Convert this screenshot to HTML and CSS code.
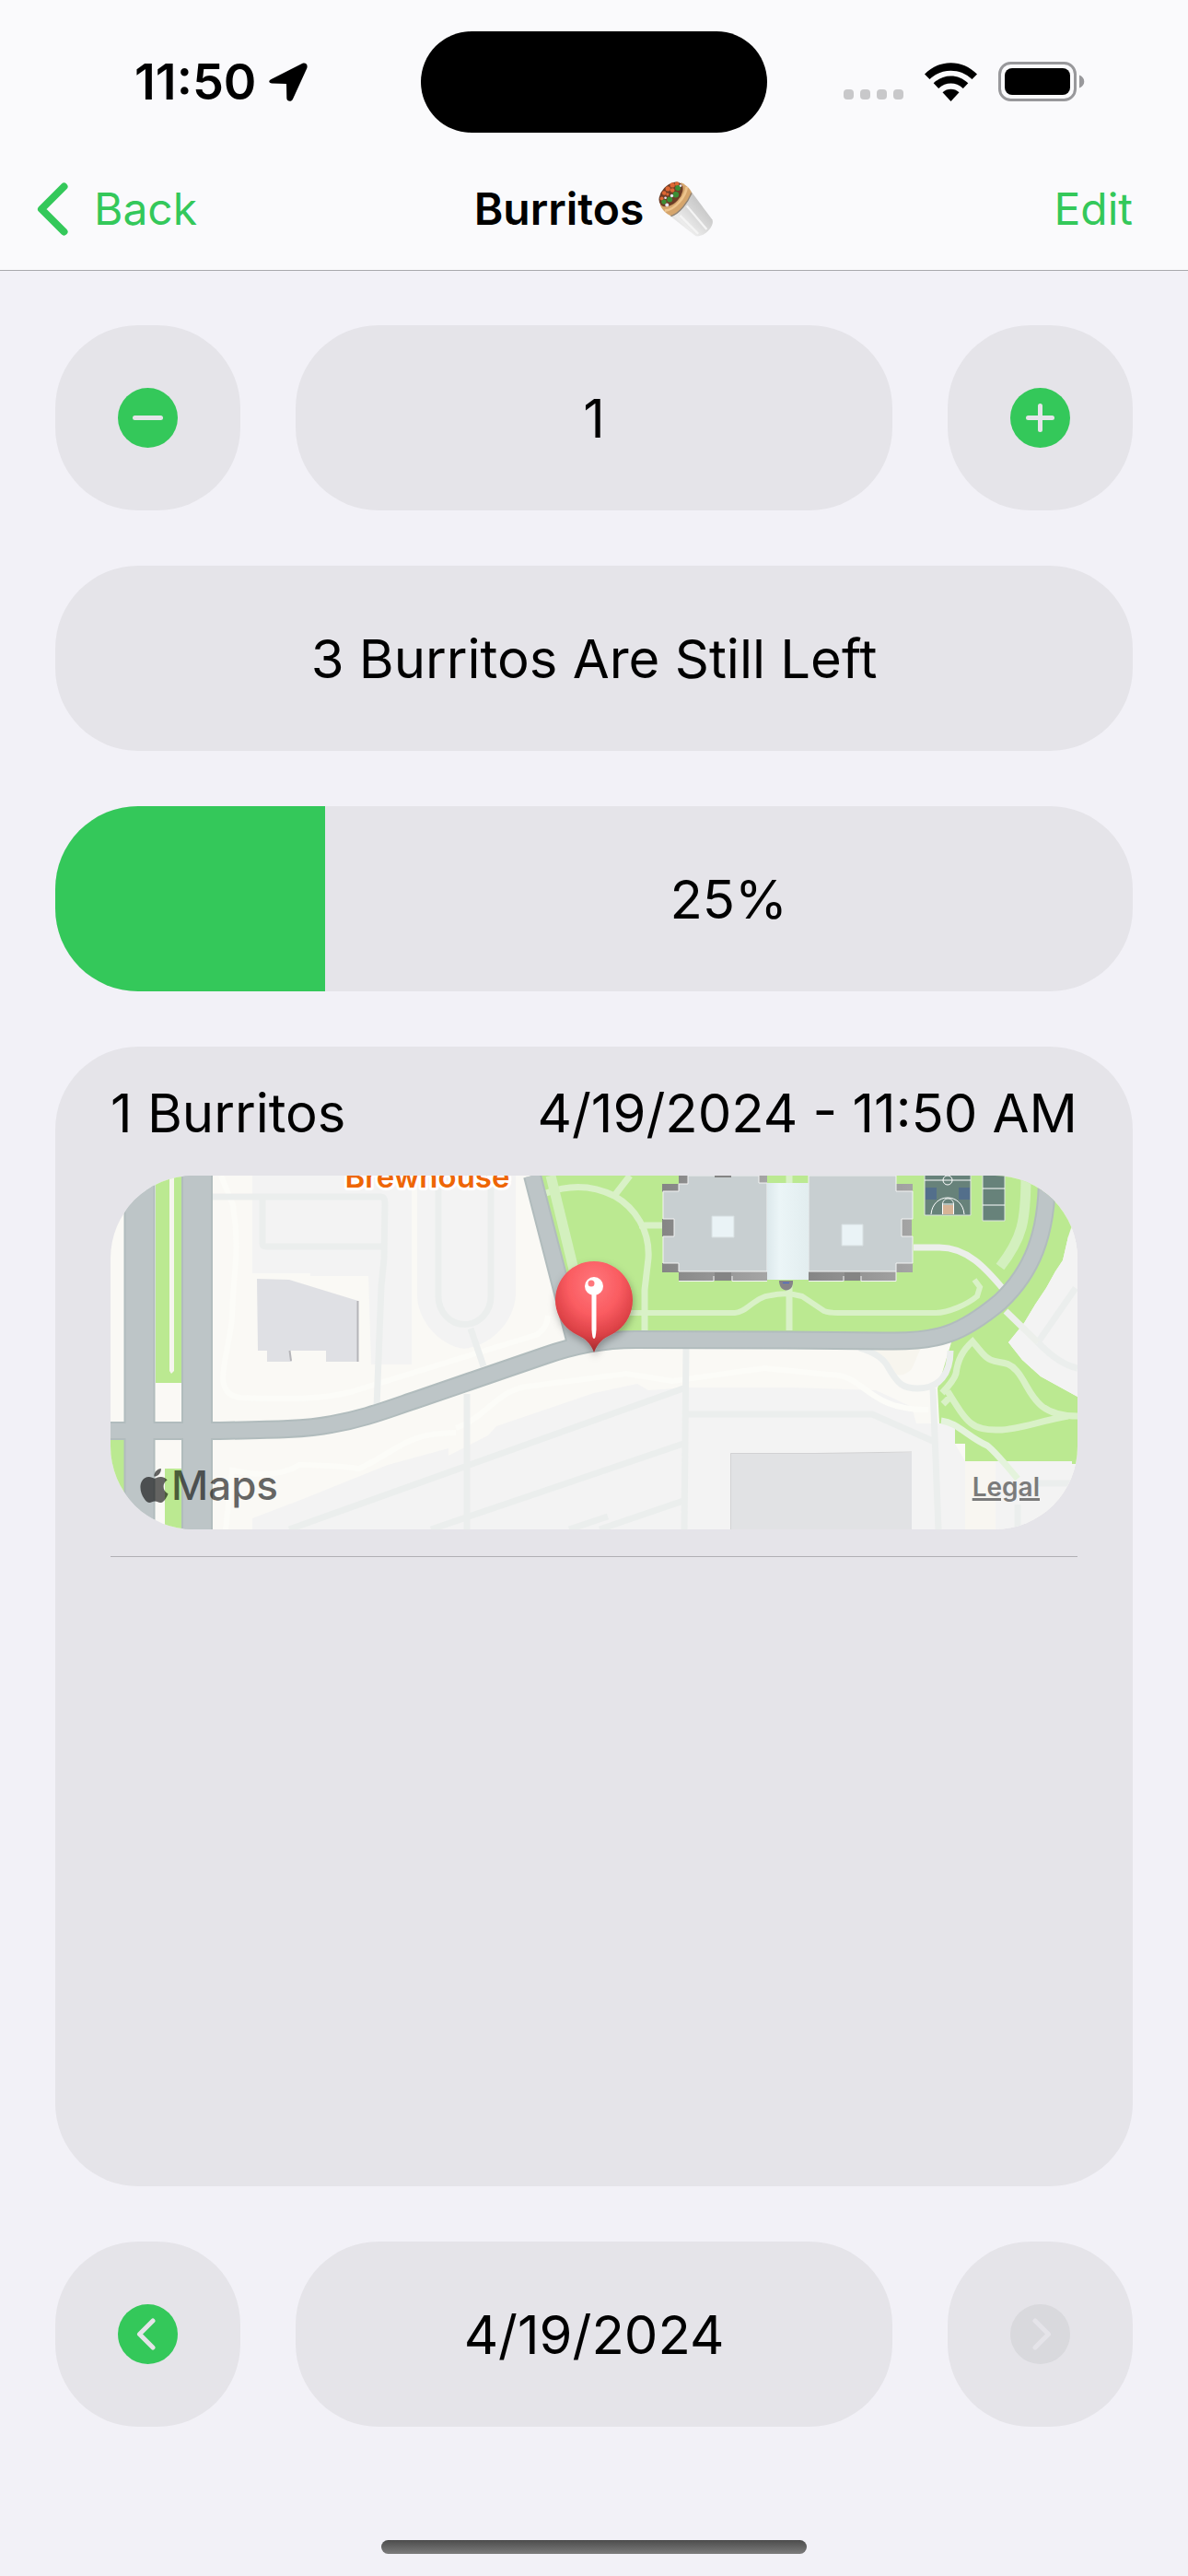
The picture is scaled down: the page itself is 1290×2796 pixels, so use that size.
FILE: index.html
```html
<!DOCTYPE html>
<html lang="en">

<head>
    <meta charset="utf-8" />
    <title>Burritos</title>
    <meta name="viewport" content="width=device-width, initial-scale=1.0">
    <link rel="stylesheet" href="styles.css">
</head>

<body>
    <header class="header">
        <!--Status bar-->
        <div class="status-bar">
            <div class="status-left">
                <span class="time">11:50</span>
                <svg class="location-icon" viewBox="0 0 42 42">
                    <path d="M3.500 17.500 L36 1 C40 -.5 42.500 2 41.300 6 L26 39.500 C24.500 43 19.500 42.300 19.300 38.500 L19 23 L3.500 22.600 C-.6 22.300 -1 19.300 3.500 17.500 Z" />
                </svg>
            </div>
            <div class="island"></div>
            <div class="status-right">
                <span class="signal"><i></i><i></i><i></i><i></i></span>
                <svg class="wifi-icon" viewBox="0 0 57 42">
                    <path d="M0 12.500 C16 -4 41 -4 57 12.500 L51.500 18 C39 5.500 18 5.500 5.500 18 Z" />
                    <path d="M9.700 22.300 C20.500 11.800 36.500 11.800 47.300 22.300 L41.800 28 C34 20.700 23 20.700 15.200 28 Z" />
                    <path d="M19.500 32.200 C24.700 27.600 32.300 27.600 37.500 32.200 L28.500 42 Z" />
                </svg>
                <svg class="battery-icon" viewBox="0 0 94 43">
                    <rect x="1.500" y="1.500" width="82" height="40" rx="12" fill="none" stroke="#98989b" stroke-width="3" />
                    <rect x="7" y="7" width="71" height="29" rx="8" />
                    <path d="M88 14.500 C95 17 95 26 88 28.500 Z" fill="#98989b" />
                </svg>
            </div>
        </div>
        <!--Navigation bar-->
        <nav class="nav-bar">
            <button class="nav-button nav-back" type="button">
                <svg class="back-icon" viewBox="0 0 34 58">
                    <path d="M29.500 4.500 L5 29 L29.500 53.500" />
                </svg>
                Back
            </button>
            <h1 class="nav-title">Burritos
                <svg class="burrito-icon" viewBox="0 0 180 182">
                    <defs>
                        <linearGradient id="foil" x1="0" y1="1" x2="1" y2="0">
                            <stop offset="0" stop-color="#bdbdbd" />
                            <stop offset=".3" stop-color="#ececec" />
                            <stop offset=".6" stop-color="#d2d2d2" />
                            <stop offset="1" stop-color="#b4b4b4" />
                        </linearGradient>
                    </defs>
                    <path d="M36 112 L106 32 L176 125 C186 145 150 184 122 180 Z" fill="url(#foil)" />
                    <path d="M70 112 L130 172 M92 80 L158 158" stroke="#f4f4f4" stroke-width="7" />
                    <path d="M4 76 L74 4 C92 12 108 28 109 42 C92 68 68 104 42 114 C22 106 10 92 4 76 Z" fill="#d5a56c" />
                    <path d="M92 18 C90 48 54 94 20 96" fill="none" stroke="#edc48d" stroke-width="8" />
                    <path d="M108 38 C96 68 68 106 40 114" fill="none" stroke="#8f8375" stroke-width="4" />
                    <ellipse cx="40" cy="42" rx="48" ry="30" transform="rotate(-47 40 42)" fill="#6d3c26" />
                    <g fill="#dd6733">
                        <circle cx="18" cy="38" r="7" />
                        <circle cx="30" cy="24" r="8" />
                        <circle cx="45" cy="12" r="8" />
                        <circle cx="60" cy="8" r="7" />
                        <circle cx="45" cy="29" r="7" />
                        <circle cx="10" cy="56" r="6" />
                        <circle cx="29" cy="42" r="5" />
                    </g>
                    <g fill="#3c8e35">
                        <circle cx="63" cy="21" r="9" />
                        <circle cx="56" cy="43" r="10" />
                        <circle cx="36" cy="59" r="9" />
                        <circle cx="17" cy="67" r="8" />
                    </g>
                    <g fill="#e7e7f5">
                        <circle cx="43" cy="47" r="5" />
                        <circle cx="27" cy="77" r="6" />
                        <circle cx="72" cy="14" r="4" />
                        <circle cx="22" cy="54" r="4" />
                    </g>
                </svg>
            </h1>
            <button class="nav-button nav-edit" type="button">Edit</button>
        </nav>
    </header>

    <main class="main">
        <!--Counter-->
        <div class="control-row">
            <button class="box" type="button" aria-label="Remove one">
                <svg class="round-icon" viewBox="0 0 65 65">
                    <circle cx="32.500" cy="32.500" r="32.500" />
                    <path d="M18.500 32.500 H46.500" />
                </svg>
            </button>
            <div class="box">1</div>
            <button class="box" type="button" aria-label="Add one">
                <svg class="round-icon" viewBox="0 0 65 65">
                    <circle cx="32.500" cy="32.500" r="32.500" />
                    <path d="M19.500 32.500 H45.500 M32.500 19.500 V45.500" />
                </svg>
            </button>
        </div>

        <div class="box">3 Burritos Are Still Left</div>

        <!--Progress-->
        <div class="box progress">
            <div class="progress-fill" style="width: 25%"></div>
            <div class="progress-text">25%</div>
        </div>

        <!--Entries of the day-->
        <section class="entries">
            <article class="entry">
                <div class="entry-head">
                    <span>1 Burritos</span>
                    <span>4/19/2024 - 11:50 AM</span>
                </div>
                <div class="map">
                    <svg class="map-canvas" viewBox="0 0 1050 384" preserveAspectRatio="xMidYMid slice">
                        <defs>
                            <radialGradient id="pin" cx=".5" cy=".25" r=".75">
                                <stop offset="0" stop-color="#ff777c" />
                                <stop offset=".45" stop-color="#fa5c61" />
                                <stop offset=".75" stop-color="#dc4146" />
                                <stop offset="1" stop-color="#a02a2e" />
                            </radialGradient>
                            <linearGradient id="brick">
                                <stop offset="0" stop-color="#858585" />
                                <stop offset="1" stop-color="#a5a5a5" />
                            </linearGradient>
                            <linearGradient id="glass">
                                <stop offset="0" stop-color="#dde9ec" />
                                <stop offset=".3" stop-color="#ebf5f7" />
                                <stop offset="1" stop-color="#e2edef" />
                            </linearGradient>
                            <filter id="shadow" x="-30%" y="-30%" width="160%" height="160%">
                                <feDropShadow dx="1" dy="4" stdDeviation="4" flood-opacity=".3" />
                            </filter>
                        </defs>
                        <rect width="1050" height="384" fill="#faf9f5" />

                        <!--Parking lots-->
                        <g fill="#f3f3f3">
                            <path d="M154 0 H327 V205 H283 L280 109 H217 V106 H154 Z" />
                            <path d="M333 0 H440 V130 C438 158 415 184 384 188 C355 184 333 155 333 130 Z" />
                            <path d="M154 384 V372 L209 351 L301 314 L367 296 V304 L410 282 L419 272 L525 236 L572 226 L584 233 L627 230 H741 L831 233 L870 251 L875 269 H917 V291 L928 310 H1050 V384 Z" />
                        </g>
                        <path d="M928 310 H961 V384 H928 Z" fill="#f8f6f1" />
                        <path d="M823 187 H880 L870 210 Q855 225 840 206 Z" fill="#f7f5ee" />

                        <!--Grass-->
                        <g fill="#bbe991">
                            <path d="M49 0 H77 V225 H49 Z M59 318 H77 V384 H59 Z M0 286 H15 V384 H0 Z" />
                            <path d="M465 0 H1050 V54 H1044 V66 H1040 L1034 92 L1026 104 L1016 122 L1004 140 L992 160 L975 181 L990 200 L1010 218 L1030 229 L1050 240 V313 H1044 V310 H928 V291 H917 V269 H900 L898 231 L913 181 L505 184 Z" />
                        </g>
                        <path d="M1044 54 H1050 V240 L1030 229 L1010 218 L990 200 L975 181 L992 160 L1004 140 L1016 122 L1026 104 L1034 92 L1040 66 Z" fill="#f3f3f3" />
                        <path d="M64 0 H69 V212 L66 215 L64 212 Z" fill="#f6f5ee" />

                        <!--Footpaths-->
                        <g fill="none" stroke="#fcfcf8" stroke-width="6">
                            <path d="M120 0 L133 32 C141 80 133 110 132 151 C131 190 105 238 142 241 C190 243 230 243 260 235 L462 173 Q474 166 475 152" />
                            <path d="M125 384 L132 320 Q180 330 205 314 Q250 315 270 318 C310 300 320 279 375 279" />
                            <path d="M375 274 C410 262 420 230 460 228 L560 215 L610 223 L710 209 L780 216 C820 215 820 255 888 254" />
                        </g>
                        <g fill="none" stroke="#ebeeed" stroke-width="7">
                            <path d="M111 23 H294 Q298 23 298 30 L297 90 L294 120 L289 252" />
                            <path d="M165 23 V74 Q165 77 170 77 H296" />
                            <path d="M356 12 V131 A28 30 0 0 0 413 131 V12 M391 166 L405 207" />
                            <path d="M387 237 V384 M194 384 L622 231 M348 384 L622 291 M531 384 L622 353 M498 384 L540 370" />
                            <path d="M625 187 L623 384 M627 259 H827 L895 289 M893 231 L899 384" />
                            <path d="M813 187 Q838 194 845 209 C855 226 860 231 877 231 C900 231 912 215 912 190" />
                            <path d="M1007 181 Q1030 205 1050 209 M1007 181 L1048 122 M985 384 V357 M1005 334 H1050" />
                        </g>
                        <g fill="none" stroke="#d9f1c7" stroke-width="7">
                            <path d="M473 19 C500 9 525 11 547 22 C570 35 586 60 584 90 L580 124 V168 M547 22 L564 0 M574 54 H599" />
                            <path d="M563 149 H678 C690 149 700 131 717 130 Q734 126 751 131 L775 147 Q780 149 790 149 H895 C910 149 930 140 941 131 L944 121 L938 113" stroke-width="6" />
                            <path d="M737 0 V9 M737 118 V168" />
                            <path d="M903 236 Q916 222 918 215 C920 200 925 190 936 180 L946 192 C960 209 970 196 984 212 C1000 230 1000 261 1050 261" />
                            <path d="M904 248 L913 239 M909 234 C930 268 935 277 965 276 C985 276 1010 266 1040 261" />
                            <path d="M902 266 C920 268 930 283 952 293 Q960 299 985 329" stroke="#e4f3dc" />
                        </g>
                        <g fill="none" stroke="#d3f0be" stroke-width="11">
                            <path d="M478 0 L504 106" />
                            <path d="M994 0 C994 50 990 68 966 99" />
                        </g>
                        <g fill="none" stroke="#ecefeb" stroke-width="7">
                            <path d="M872 78 H900 C930 78 950 100 970 124 M972 147 L1007 181" />
                        </g>

                        <!--Roads-->
                        <g fill="none">
                            <g stroke="#b1bcbd">
                                <path d="M0 277 H111 C170 276 210 276 240 270 C275 264 300 254 330 244 L470 196 Q520 178 570 178 L734 178.500 L841 179.500 C900 181 925 171 966 137 C1000 105 1017 65 1017 0 M458 0 L507 190" stroke-width="20" />
                                <path d="M31.500 0 V384 M94 0 V384" stroke-width="34" />
                            </g>
                            <g stroke="#bdc5c7">
                                <path d="M31.500 0 V384 M94 0 V384" stroke-width="30" />
                                <path d="M0 277 H111 C170 276 210 276 240 270 C275 264 300 254 330 244 L470 196 Q520 178 570 178 L734 178.500 L841 179.500 C900 181 925 171 966 137 C1000 105 1017 65 1017 0 M458 0 L507 190" stroke-width="16" />
                            </g>
                        </g>

                        <!--Buildings-->
                        <path d="M159 112 L194 113 L269 136 V202 H234 V190 H194 L197 202 H170 V190 H160 Z" fill="#dfe0e4" />
                        <path d="M268.500 136 V202 M194.500 190 L196 201" stroke="#b5b5b9" stroke-width="2" />
                        <path d="M673 301 H870 V384 H673 Z" fill="#e1e2e4" />
                        <path d="M673.500 384 V301.500 H766 L870 300" fill="none" stroke="#d2d2d3" />
                        <g fill="url(#brick)">
                            <path d="M617 0 H627 V9 H617 Z M599 9 H618 V18 H599 Z M599 47 H612 V66 H599 Z M599 95 H618 V105 H599 Z M617 103 H713 V114 H617 Z M704 0 H713 V9 H704 Z" />
                            <path d="M852 9 H871 V18 H852 Z M858 47 H870 V66 H858 Z M852 95 H871 V105 H852 Z M758 103 H853 V114 H758 Z" />
                        </g>
                        <g fill="#c8cfd1" stroke="#f2f3f3">
                            <path d="M627 0 H704 V8 H713 V104 H617 V95 H600 V66 H612 V47 H600 V17 H617 V9 H627 Z" />
                            <path d="M758 0 H853 V17 H871 V47 H859 V66 H871 V95 H853 V104 H758 Z" />
                            <path d="M617 114.500 H655 V109 M675 109 V114.500 H713 M758 114.500 H796 V109 M815 109 V114.500 H853 V104" fill="none" />
                        </g>
                        <path d="M656 105 H674 V114 H656 Z M797 105 H814 V114 H797 Z M656 0 H674 V2 H656 Z" fill="#848484" />
                        <path d="M713 8 H758 V113 H713 Z" fill="url(#glass)" />
                        <path d="M653 44 H677 V67 H653 Z M794 53 H817 V76 H794 Z" fill="#eaf3f6" stroke="#d7dfe1" />
                        <path d="M726 114 H741 C742 128 726 128 726 114 Z" fill="#858388" />
                        <path d="M730 116.500 H737" stroke="#4468cf" />

                        <!--Sports courts-->
                        <path d="M884 -2 H934 V43 H884 Z M947 -2 H971 V49 H947 Z" fill="#67827a" stroke="#dde4df" />
                        <path d="M885 13 H897 V26 H885 Z M921 13 H933 V26 H921 Z" fill="#536f8b" />
                        <path d="M904 32 H915 V42 H904 Z" fill="#d6b396" />
                        <g fill="none" stroke="#fff">
                            <circle cx="909" cy="5" r="5" />
                            <path d="M884 5 H934 M891 42 C893 18 925 18 927 42 M903.500 42 V31 C904 23 915 23 915.500 31 V42 M903.500 31 H915.500 M947 14 H971 M947 32 H971" />
                        </g>

                        <text class="map-place" x="344" y="13">Brewhouse</text>

                        <!--Pin-->
                        <g filter="url(#shadow)">
                            <path d="M525 192 C521 181 515 177 507 173 A42 42 0 1 1 543 173 C535 177 529 181 525 192 Z" fill="url(#pin)" />
                        </g>
                        <circle cx="525" cy="120" r="10" fill="#fff" />
                        <path d="M522.500 128 H527.500 V167 Q527 177 525 177 Q523 177 522.500 167 Z" fill="#fff" />
                        <circle cx="522" cy="117" r="3.500" fill="#ff777c" />
                    </svg>
                    <div class="map-logo">
                        <svg class="apple-icon" viewBox="2 0 20 24">
                            <path d="M12.152 6.896c-.948 0-2.415-1.078-3.960-1.040-2.040.027-3.910 1.183-4.961 3.014-2.117 3.675-.546 9.103 1.519 12.090 1.013 1.454 2.208 3.090 3.792 3.039 1.520-.065 2.090-.987 3.935-.987 1.831 0 2.350.987 3.960.948 1.637-.026 2.676-1.480 3.676-2.948 1.156-1.688 1.636-3.325 1.662-3.415-.039-.013-3.182-1.221-3.220-4.857-.026-3.040 2.480-4.494 2.597-4.559-1.429-2.090-3.623-2.324-4.390-2.376-2-.156-3.675 1.090-4.610 1.090zM15.530 3.830c.843-1.012 1.400-2.427 1.245-3.830-1.207.052-2.662.805-3.532 1.818-.780.896-1.454 2.338-1.273 3.714 1.338.104 2.715-.688 3.559-1.701" />
                        </svg>
                        Maps
                    </div>
                    <a class="map-legal" href="#">Legal</a>
                </div>
            </article>
        </section>

        <!--Date picker-->
        <div class="control-row">
            <button class="box" type="button" aria-label="Previous day">
                <svg class="round-icon" viewBox="0 0 65 65">
                    <circle cx="32.500" cy="32.500" r="32.500" />
                    <path d="M38 18 L23.500 32.500 L38 47" />
                </svg>
            </button>
            <div class="box">4/19/2024</div>
            <button class="box" type="button" aria-label="Next day" disabled>
                <svg class="round-icon" viewBox="0 0 65 65">
                    <circle cx="32.500" cy="32.500" r="32.500" />
                    <path d="M27 18 L41.500 32.500 L27 47" />
                </svg>
            </button>
        </div>
    </main>

    <footer class="footer">
        <div class="home-indicator"></div>
    </footer>
</body>

</html>
```

FILE: styles.css
```css
* {
    box-sizing: border-box;
    margin: 0;
    padding: 0;
}

:root {
    --green: #34c85a;
    --background: #f2f1f7;
    --box: #e5e4e9;
    --radius: 90px;
    --gap: 60px;
}

body {
    display: flex;
    flex-direction: column;
    min-height: 100vh;
    background-color: var(--background);
    color: black;
    font-family: Inter, "Liberation Sans", sans-serif;
    font-size: 58px;
    line-height: 80px;
}

button {
    border: none;
    background: none;
    color: inherit;
    font: inherit;
}

svg {
    display: block;
}

/* Header */
.header {
    background-color: #fafafc;
    border-bottom: 1px solid #a9a9ad;
}

.status-bar {
    display: grid;
    grid-template-columns: 1fr 376px 1fr;
    align-items: center;
    height: 161px;
    padding-top: 16px;
}

.status-left {
    display: flex;
    align-items: center;
    gap: 14px;
    padding-left: 146px;
}

.time {
    font-size: 54px;
    font-weight: 600;
}

.location-icon {
    width: 42px;
    height: 42px;
}

.island {
    height: 110px;
    border-radius: 55px;
    background-color: black;
}

.status-right {
    display: flex;
    align-items: center;
    justify-content: flex-end;
    gap: 23px;
    padding-right: 112px;
}

.signal {
    display: flex;
    align-self: flex-end;
    gap: 7px;
    padding-bottom: 2px;
}

.signal i {
    width: 11px;
    height: 11px;
    border-radius: 4px;
    background-color: #c8c8ca;
}

.wifi-icon {
    width: 57px;
    height: 42px;
}

.battery-icon {
    width: 94px;
    height: 43px;
}

.nav-bar {
    display: grid;
    grid-template-columns: 1fr auto 1fr;
    align-items: center;
    height: 132px;
    padding: 0 60px;
    font-size: 48px;
}

.nav-button {
    display: flex;
    align-items: center;
    gap: 28px;
    color: var(--green);
}

.nav-back {
    justify-self: start;
    margin-left: -20px;
}

.nav-edit {
    justify-self: end;
}

.back-icon {
    width: 34px;
    height: 58px;
    fill: none;
    stroke: var(--green);
    stroke-width: 8;
    stroke-linecap: round;
    stroke-linejoin: round;
}

.nav-title {
    display: flex;
    align-items: center;
    gap: 16px;
    font-size: 48px;
    font-weight: 600;
}

.burrito-icon {
    width: 60px;
    height: 60px;
}

/* Content */
.main {
    display: flex;
    flex: 1;
    flex-direction: column;
    gap: var(--gap);
    padding: 59px 60px 0;
}

.control-row {
    display: grid;
    grid-template-columns: 201px 1fr 201px;
    gap: var(--gap);
}

.box {
    display: flex;
    align-items: center;
    justify-content: center;
    height: 201px;
    border-radius: var(--radius);
    background-color: var(--box);
}

.round-icon {
    width: 65px;
    height: 65px;
    fill: var(--green);
    stroke: none;
}

.round-icon path {
    fill: none;
    stroke: var(--box);
    stroke-width: 5;
    stroke-linecap: round;
    stroke-linejoin: round;
}

.box:disabled .round-icon {
    fill: #d9d9dd;
}

.progress {
    align-items: stretch;
    overflow: hidden;
}

.progress-fill {
    background-color: var(--green);
}

.progress-text {
    flex: 1;
    align-self: center;
    text-align: center;
}

.entries {
    flex: 1;
    padding: 0 60px;
    border-radius: var(--radius);
    background-color: var(--box);
}

.entry {
    padding-bottom: 29px;
    border-bottom: 1px solid #b0b0b5;
}

.entry-head {
    display: flex;
    justify-content: space-between;
    padding: 32px 0 28px;
}

/* Map */
.map {
    position: relative;
    height: 384px;
    border-radius: var(--radius);
    overflow: hidden;
}

.map-canvas {
    width: 100%;
    height: 100%;
}

.map-place {
    fill: #ee6606;
    stroke: white;
    stroke-width: 6px;
    stroke-linejoin: round;
    paint-order: stroke;
    font-size: 33px;
    font-weight: 600;
    text-anchor: middle;
}

.map-logo {
    position: absolute;
    left: 32px;
    bottom: 16px;
    display: flex;
    align-items: center;
    gap: 3px;
    color: rgba(0, 0, 0, 0.6);
    font-size: 44px;
    font-weight: 500;
    line-height: 64px;
}

.apple-icon {
    width: 31px;
    height: 37px;
    fill: rgba(0, 0, 0, 0.6);
}

.map-legal {
    position: absolute;
    right: 41px;
    bottom: 28px;
    color: #7b7b7b;
    font-size: 28px;
    font-weight: 600;
    line-height: 36px;
    text-decoration-thickness: 3px;
}

/* Footer */
.footer {
    display: flex;
    align-items: flex-end;
    justify-content: center;
    height: 162px;
    padding-bottom: 24px;
}

.home-indicator {
    width: 462px;
    height: 15px;
    border-radius: 8px;
    background: linear-gradient(#4c4c4c, #7c7c7c);
}
```
